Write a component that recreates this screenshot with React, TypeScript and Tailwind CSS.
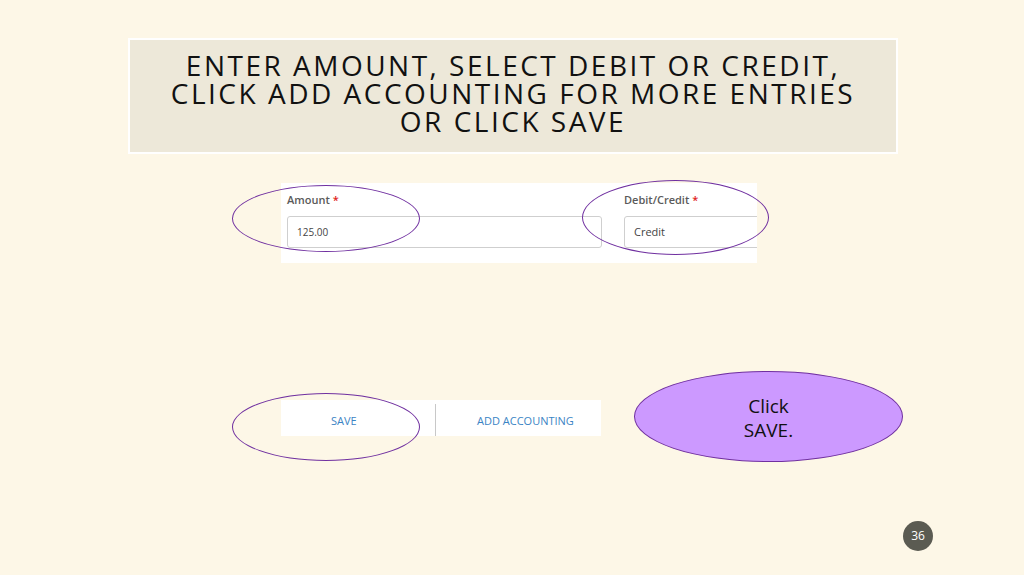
import React from "react";

export default function App() {
  return (
    <div
      className="relative w-[1024px] h-[575px] overflow-hidden bg-[#FDF7E7]"
      style={{ fontFamily: '"Open Sans", "Noto Sans", sans-serif' }}
    >
      {/* Title box */}
      <div className="ml-[128px] mt-[38px] w-[770px] h-[116px] border-2 border-white bg-[#EDE8D9] flex flex-col items-center justify-center pb-[6px]">
        <div className="text-[28px] leading-[28px] tracking-[2.5px] text-[#111] text-center uppercase">
          <div>Enter amount, select debit or credit,</div>
          <div>click add accounting for more entries</div>
          <div>or click save</div>
        </div>
      </div>

      {/* Form screenshot */}
      <div className="ml-[281px] mt-[29px] w-[476px] h-[80px] bg-white overflow-hidden flex pl-[6px] pt-[11px]">
        <div className="w-[315px] flex flex-col">
          <div className="text-[11px] leading-[12px] font-semibold text-[#5a5a5a] h-[12px]">
            Amount <span className="text-[#e02020]">*</span>
          </div>
          <div className="mt-[10px] h-[32px] w-[315px] border border-[#cfcfcf] rounded-[3px] flex items-center pl-[9px] text-[10px] text-[#444]">
            125.00
          </div>
        </div>
        <div className="ml-[22px] flex flex-col">
          <div className="text-[11px] leading-[12px] font-semibold text-[#5a5a5a] h-[12px]">
            Debit/Credit <span className="text-[#e02020]">*</span>
          </div>
          <div className="mt-[10px] h-[32px] w-[160px] border border-[#cfcfcf] rounded-[3px] flex items-center pl-[9px] text-[11px] text-[#444]">
            Credit
          </div>
        </div>
      </div>

      {/* Buttons bar */}
      <div className="ml-[281px] mt-[137px] w-[320px] h-[36px] bg-white flex items-center text-[11px] text-[#3b84c4]">
        <div className="w-[154px] h-full flex items-center pl-[50px] pt-[6px]">SAVE</div>
        <div className="w-px h-[32px] self-end bg-[#c8c8c8]"></div>
        <div className="pl-[41px] pt-[6px]">ADD ACCOUNTING</div>
      </div>

      {/* Annotation ellipses */}
      <div className="absolute left-[232px] top-[185px] w-[188px] h-[67px] rounded-[50%] border-[1.5px] border-[#7030A0]"></div>
      <div className="absolute left-[582px] top-[180px] w-[187px] h-[75px] rounded-[50%] border-[1.5px] border-[#7030A0]"></div>
      <div className="absolute left-[232px] top-[393px] w-[188px] h-[68px] rounded-[50%] border-[1.5px] border-[#7030A0]"></div>

      {/* Callout */}
      <div className="absolute left-[634px] top-[371px] w-[269px] h-[91px] rounded-[50%] border-[1.5px] border-[#7030A0] bg-[#CC99FF] flex flex-col items-center pt-[22px] text-[19px] leading-[24px] text-[#111]">
        <div>Click</div>
        <div>SAVE.</div>
      </div>

      {/* Page number */}
      <div className="absolute left-[903px] top-[521px] w-[30px] h-[30px] rounded-full bg-[#5B5B52] flex items-center justify-center text-[12px] text-white">
        36
      </div>
    </div>
  );
}
